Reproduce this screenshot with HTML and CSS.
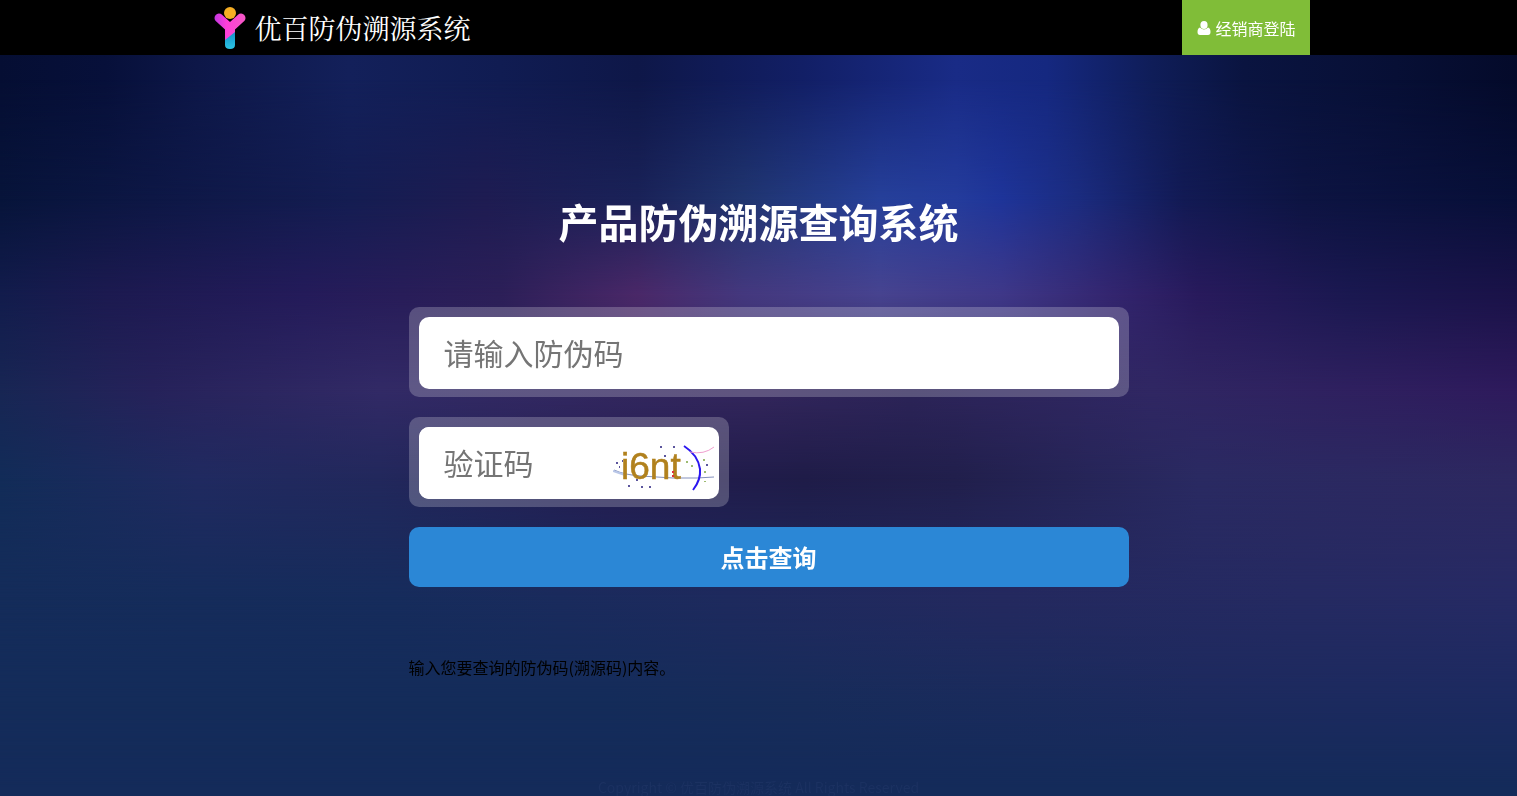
FILE: index.html
```
<!DOCTYPE html>
<html lang="zh-CN">
<head>
    <meta charset="UTF-8">
    <meta name="viewport" content="width=device-width, initial-scale=1.0">
    <title>产品防伪溯源查询系统</title>
    <link rel="stylesheet" href="styles.css">
</head>
<body>
    <div class="backdrop" aria-hidden="true">
        <div class="band band-1"></div>
        <div class="band band-2"></div>
        <div class="band band-3"></div>
        <div class="band band-4"></div>
        <div class="band band-5"></div>
        <div class="band band-6"></div>
        <div class="band band-7"></div>
        <div class="band band-8"></div>
    </div>

    <header class="header">
        <div class="header-inner">
            <a class="logo" href="#">
                <svg class="logo-icon" viewBox="0 0 34 44" aria-hidden="true">
                    <defs>
                        <linearGradient id="arms" gradientUnits="userSpaceOnUse" x1="0" y1="0" x2="34" y2="0">
                            <stop offset="0" stop-color="#b935e0"/>
                            <stop offset="0.4" stop-color="#ff3fd8"/>
                            <stop offset="1" stop-color="#f45bc4"/>
                        </linearGradient>
                        <linearGradient id="stem" x1="0" y1="0" x2="0" y2="1">
                            <stop offset="0" stop-color="#1590c8"/>
                            <stop offset="1" stop-color="#2bc4e4"/>
                        </linearGradient>
                    </defs>
                    <path d="M6 12L17 22L28 12" fill="none" stroke="url(#arms)" stroke-width="9" stroke-linecap="round" stroke-linejoin="round"/>
                    <path d="M12 20H22V28L12 35Z" fill="url(#arms)"/>
                    <path d="M12 34L22 26V39Q22 43 17 43Q12 43 12 39Z" fill="url(#stem)"/>
                    <circle cx="17" cy="7" r="6" fill="#f5ae24"/>
                </svg>
                <span>优百防伪溯源系统</span>
            </a>
            <a class="login" href="#">
                <svg class="user-icon" viewBox="0 0 14 14" aria-hidden="true">
                    <ellipse cx="7" cy="4" rx="3.6" ry="4"/>
                    <path d="M3 6.5Q0.5 7 0.5 11Q0.5 14 3 14H11Q13.500 14 13.500 11Q13.500 7 11 6.500Q7 10.500 3 6.500Z"/>
                </svg>
                <span>经销商登陆</span>
            </a>
        </div>
    </header>

    <main class="main">
        <h1>产品防伪溯源查询系统</h1>

        <form class="query-form">
            <div class="field">
                <input type="text" name="code" placeholder="请输入防伪码" aria-label="请输入防伪码">
            </div>
            <div class="field field-captcha">
                <div class="captcha-box">
                    <input type="text" name="captcha" placeholder="验证码" aria-label="验证码">
                    <svg class="captcha" viewBox="0 0 104 50" aria-hidden="true">
                        <path d="M1 26Q12 31 28 32T60 34H84L101 33" fill="none" stroke="#8390bd" stroke-width="1"/>
                        <path d="M0 27L12 31" stroke="#b9c7e8" stroke-width="2"/>
                        <text x="8" y="35">i6nt</text>
                        <path d="M71 2Q85 11 87 25Q88 36 80 46" fill="none" stroke="#2b16f0" stroke-width="2"/>
                        <path d="M77 8Q91 11 101 3" fill="none" stroke="#f0a0cf" stroke-width="1"/>
                        <g fill="#5b559d">
                            <rect x="3" y="18" width="2" height="2"/>
                            <rect x="6" y="22" width="1" height="2"/>
                            <rect x="9" y="16" width="1" height="2"/>
                            <rect x="47" y="2" width="2" height="2"/>
                            <rect x="60" y="2" width="2" height="2"/>
                            <rect x="51" y="11" width="2" height="2"/>
                            <rect x="23" y="35" width="2" height="2"/>
                            <rect x="15" y="41" width="2" height="2"/>
                            <rect x="28" y="42" width="2" height="2"/>
                            <rect x="36" y="42" width="2" height="2"/>
                            <rect x="93" y="20" width="2" height="2"/>
                        </g>
                        <g fill="#e0303c">
                            <rect x="59" y="27" width="2" height="2"/>
                            <rect x="59" y="31" width="2" height="2"/>
                        </g>
                        <g fill="#9dbb70">
                            <rect x="73" y="17" width="2" height="2"/>
                            <rect x="78" y="21" width="2" height="2"/>
                            <rect x="90" y="15" width="2" height="2"/>
                            <rect x="91" y="27" width="2" height="2"/>
                            <rect x="91" y="37" width="2" height="1"/>
                        </g>
                    </svg>
                </div>
            </div>
            <button type="button">点击查询</button>
        </form>

        <p class="tip">输入您要查询的防伪码(溯源码)内容。</p>
    </main>

    <footer class="footer">
        <p>Copyright © 优百防伪溯源系统 All Rights Reserved</p>
    </footer>
</body>
</html>
```
FILE: styles.css
```
* {
    box-sizing: border-box;
}

body {
    display: flex;
    flex-direction: column;
    min-height: 100vh;
    margin: 0;
    background-color: #142b5a;
    font-family: "Noto Sans CJK SC", sans-serif;
    font-size: 16px;
}

h1,
p {
    margin: 0;
}

a {
    color: #fff;
    text-decoration: none;
}

/* night sky: each band fades in over the one above it */
.backdrop {
    position: fixed;
    inset: 0;
    z-index: -1;
}

.band {
    position: absolute;
    inset: 0;
}

.band-1 {
    background: linear-gradient(to right, #050e33, #07103a 7%, #0d1748 13%, #13205a 23%, #101c52 33%, #0e1748 42%, #121f66 53%, #192b86 63%, #152880 69%, #0f1d58 76%, #0a1440 82%, #070f35 92%, #040a2a);
}

.band-2 {
    background: linear-gradient(to right, #07143a, #0d1745 10%, #141d52 23%, #1e1c52 32%, #1a2258 42%, #20356f 49%, #26409a 58%, #243c9c 63%, #1e3499 66%, #1b2c80 71%, #121a54 78%, #0d1442 86%, #070f38);
    mask-image: linear-gradient(transparent 10%, #000 25%);
}

.band-3 {
    background: linear-gradient(to right, #121c4c, #1c1a50 7%, #241b5a 20%, #2c1f58 33%, #4a2868 42%, #44387e 49%, #47438f 58%, #3f3888 66%, #342670 73%, #281a5c 79%, #1a1850 89%, #1a1248);
    mask-image: linear-gradient(transparent 25%, #000 37%);
}

.band-4 {
    background: linear-gradient(to right, #182654, #26225a 10%, #322a66 25%, #33265c 50%, #2c2458 60%, #302763 76%, #2e1a5c);
    mask-image: linear-gradient(transparent 37%, #000 49%);
}

.band-5 {
    background: linear-gradient(to right, #122c58, #202a60 13%, #22285c 25%, #241c50 40%, #1f1c48 53%, #211f4c 63%, #2a2a62 79%, #2d2860);
    mask-image: linear-gradient(transparent 49%, #000 60%);
}

.band-6 {
    background: linear-gradient(to right, #142c5a, #162c5c 26%, #1e2a5e 48%, #24295f 66%, #252a62 86%, #262a64);
    mask-image: linear-gradient(transparent 60%, #000 75%);
}

.band-7 {
    background: linear-gradient(to right, #142c5a, #142c5a 40%, #172c5a 53%, #1c2a5e 79%, #1c2a60);
    mask-image: linear-gradient(transparent 75%, #000 88%);
}

.band-8 {
    background: #142b5a;
    mask-image: linear-gradient(transparent 88%, #000 99%);
}

.header {
    background-color: #000;
}

.header-inner {
    display: flex;
    justify-content: space-between;
    max-width: 1102px;
    height: 55px;
    margin: 0 auto;
}

.logo {
    display: flex;
    align-items: center;
    gap: 8px;
    padding-left: 5px;
    font-family: "Noto Serif CJK SC", "Noto Sans CJK SC", serif;
    font-size: 27px;
}

.logo-icon {
    width: 34px;
    height: 44px;
}

.login {
    display: flex;
    align-items: center;
    gap: 4px;
    padding: 0 14px 0 15px;
    background-color: #80bd38;
}

.user-icon {
    width: 14px;
    height: 14px;
    fill: #fff;
}

.main {
    flex: 1;
    width: 100%;
    max-width: 700px;
    margin: 0 auto;
    padding-top: 136px;
}

h1 {
    margin-bottom: 56px;
    color: #fff;
    font-size: 40px;
    line-height: 60px;
    text-align: center;
}

.query-form {
    display: flex;
    flex-direction: column;
    gap: 20px;
    width: 720px;
    max-width: 100vw;
}

.field {
    padding: 10px 10px 8px;
    background-color: rgba(255, 255, 255, 0.22);
    border-radius: 10px;
}

.field-captcha {
    width: 320px;
}

.field input {
    display: block;
    width: 100%;
    height: 72px;
    padding: 0 25px 2px;
    border: none;
    border-radius: 10px;
    background-color: #fff;
    font-family: inherit;
    font-size: 30px;
}

.field input::placeholder {
    color: #757575;
}

.captcha-box {
    display: flex;
    align-items: center;
    padding-right: 2px;
    background-color: #fff;
    border-radius: 10px;
}

.captcha-box input {
    flex: 1;
    min-width: 0;
    padding-right: 0;
}

.captcha {
    flex: none;
    width: 104px;
    height: 50px;
    margin-top: 12px;
}

.captcha text {
    fill: #b1811d;
    stroke: #b1811d;
    stroke-width: 0.5;
    font-family: "Liberation Sans", Arial, sans-serif;
    font-size: 37px;
}

.query-form button {
    height: 60px;
    padding-bottom: 3px;
    border: none;
    border-radius: 10px;
    background-color: #2b87d6;
    color: #fff;
    font-family: inherit;
    font-size: 24px;
    font-weight: bold;
    cursor: pointer;
}

.tip {
    margin-top: 68px;
    color: #000;
    line-height: 24px;
}

.footer {
    color: #1b3161;
    font-size: 14px;
    line-height: 18px;
    text-align: center;
}
```
